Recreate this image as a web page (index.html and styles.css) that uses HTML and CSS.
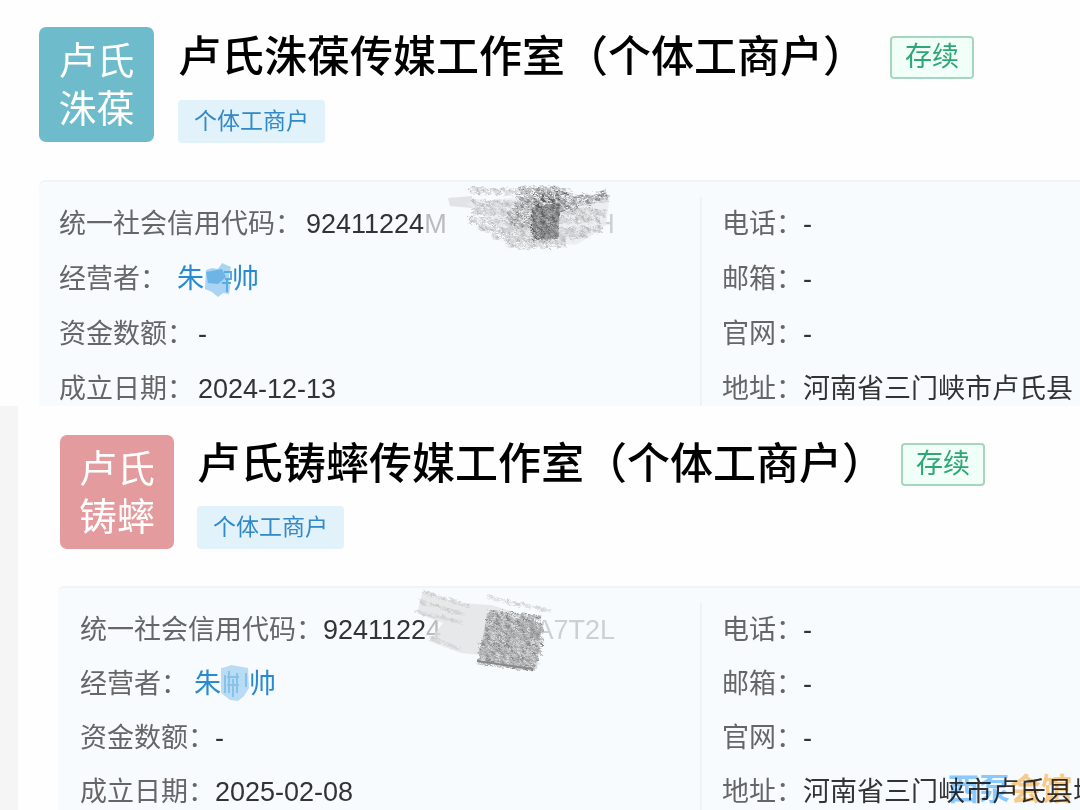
FILE: index.html
```
<!DOCTYPE html>
<html lang="zh-CN">
<head>
    <meta charset="UTF-8">
    <meta name="viewport" content="width=device-width, initial-scale=1.0">
    <title>企业信息</title>
    <link rel="stylesheet" href="styles.css">
</head>
<body>
    <svg class="defs" width="0" height="0">
        <!-- 铅笔颗粒 -->
        <filter id="grain" x="-5%" y="-10%" width="110%" height="120%">
            <feTurbulence type="fractalNoise" baseFrequency="0.2 0.5" numOctaves="3" seed="4" result="noise"/>
            <feColorMatrix in="noise" type="matrix" values="0 0 0 0 0  0 0 0 0 0  0 0 0 0 0  2.4 0 0 0 -0.7" result="mask"/>
            <feComposite in="SourceGraphic" in2="mask" operator="in" result="cut"/>
            <feDisplacementMap in="cut" in2="noise" scale="8" result="rough"/>
            <feGaussianBlur in="rough" stdDeviation="0.6"/>
        </filter>
    </svg>

    <section class="company first">
        <div class="header">
            <div class="logo">卢氏<br>洙葆</div>
            <div class="info">
                <div class="title">
                    <h1>卢氏洙葆传媒工作室（个体工商户）</h1>
                    <span class="status">存续</span>
                </div>
                <span class="tag">个体工商户</span>
            </div>
        </div>
        <div class="detail">
            <ul class="left">
                <li>
                    <span class="label">统一社会信用代码：</span>
                    <span class="value code">92411224<i>M</i><b class="tail">H</b>
                        <svg class="smear" width="175" height="72" viewBox="0 0 175 72">
                            <path d="M2 13l24-2v12l-22-2z" fill="#ccc" opacity=".5"/>
                            <path d="M20 18l50 38 60 4 20-12 10-8 4-30-90 2z" fill="#e9ecef" opacity=".8"/>
                            <g filter="url(#grain)" fill="none">
                                <path d="M24 5c50 5 90-1 100 2M26 18c40 2 90 2 136-4M26 26c40 3 80-3 134 2M22 35c50 4 90 1 132-2M32 43c40 5 80 3 124 1M46 51c30 3 70 3 96-2M60 59c30 2 40 1 60 0" stroke="#bbb" stroke-width="7"/>
                                <path d="M72 6h42M70 14h76l16-6M66 22h66M62 31h52M64 39h48" stroke="#8c8c8c" stroke-width="9"/>
                                <path d="M88 12h34M86 19h36M86 27h28M86 35h24M84 43h26M86 51h26" stroke="#5c5c5c" stroke-width="9"/>
                            </g>
                            <path d="M86 22l28-4-2 36h-24z" fill="#666" opacity=".45"/>
                        </svg>
                    </span>
                </li>
                <li>
                    <span class="label">经营者：</span>
                    <a class="value name" href="#">朱<svg class="mosaic" width="28" height="36" viewBox="0 0 28 36">
                            <path d="M2 8l6-2 6 1 4-6 9 4-2 8 1 12-1 7-6-1-5 4-6-5-7-3z" fill="#a9d4f3"/>
                            <path d="M2 10l16-3 4 8-8 7-10-1z" fill="#5fabe3" opacity=".8"/>
                            <path d="M20 10h7v7h-6M18 21h9M23 17v13" stroke="#5baae0" stroke-width="2" fill="none"/>
                        </svg>帅</a>
                </li>
                <li><span class="label">资金数额：</span><span class="value">-</span></li>
                <li><span class="label">成立日期：</span><span class="value">2024-12-13</span></li>
            </ul>
            <ul class="right">
                <li><span class="label">电话：</span><span class="value">-</span></li>
                <li><span class="label">邮箱：</span><span class="value">-</span></li>
                <li><span class="label">官网：</span><span class="value">-</span></li>
                <li><span class="label">地址：</span><span class="value">河南省三门峡市卢氏县</span></li>
            </ul>
        </div>
    </section>

    <section class="company second">
        <div class="header">
            <div class="logo">卢氏<br>铸蟀</div>
            <div class="info">
                <div class="title">
                    <h1>卢氏铸蟀传媒工作室（个体工商户）</h1>
                    <span class="status">存续</span>
                </div>
                <span class="tag">个体工商户</span>
            </div>
        </div>
        <div class="detail">
            <ul class="left">
                <li>
                    <span class="label">统一社会信用代码：</span>
                    <span class="value code">9241122<i>4</i><b class="tail">JA7T2L</b>
                        <svg class="smear" width="150" height="84" viewBox="0 0 150 84">
                            <path d="M12 2l34 12 34 2 20 6-20 6-10 38-20-2-32-12 14-18-26-10z" fill="#dedfdf" opacity=".7"/>
                            <g filter="url(#grain)" fill="none">
                                <path d="M12 3l46 14M8 12l46 14M4 22l48 12M16 48l34 12M76 8l64 14" stroke="#ccc" stroke-width="4"/>
                                <path d="M76 24l54 6M76 31l54 6M74 39l58 3M74 47l58 1M70 53l62 3M68 60l62 3M68 66l60 5M66 72l58 7" stroke="#848484" stroke-width="7"/>
                            </g>
                            <path d="M76 24l54 10-4 46-58-9z" fill="#999" opacity=".35"/>
                            <path d="M66 72l56 8" stroke="#888" stroke-width="2"/>
                        </svg>
                    </span>
                </li>
                <li>
                    <span class="label">经营者：</span>
                    <a class="value name" href="#">朱<svg class="mosaic" width="28" height="38" viewBox="0 0 28 38">
                            <path d="M0 3l5-1 5-2 6 1 11 2 1 20-5 8-6 5-8-1-9-7z" fill="#b9dcf5"/>
                            <path d="M4 10v18M8 6v22M12 14v18M16 8v20M6 12h12M6 20h12M25 8v14" stroke="#7dbbe8" stroke-width="2" opacity=".8"/>
                        </svg>帅</a>
                </li>
                <li><span class="label">资金数额：</span><span class="value">-</span></li>
                <li><span class="label">成立日期：</span><span class="value">2025-02-08</span></li>
            </ul>
            <ul class="right">
                <li><span class="label">电话：</span><span class="value">-</span></li>
                <li><span class="label">邮箱：</span><span class="value">-</span></li>
                <li><span class="label">官网：</span><span class="value">-</span></li>
                <li><span class="label">地址：</span><span class="value">河南省三门峡市卢氏县城</span></li>
            </ul>
        </div>
    </section>

    <div class="watermark">西泵<span>会馆</span></div>
</body>
</html>
```
FILE: styles.css
```
* {
  margin: 0;
  padding: 0;
  box-sizing: border-box;
  list-style: none;
}
body {
  position: relative;
  height: 100vh;
  overflow: hidden;
  background-color: #fefefe;
  font-family: "Liberation Sans", "Noto Sans CJK SC", sans-serif;
  color: #333;
}
.defs {
  position: absolute;
}
.company {
  background-color: #fefefe;
}
.first {
  padding: 27px 0 0 39px;
}
/* 盖住上一张卡片的底边 */
.second {
  position: relative;
  margin-top: -11px;
  padding: 29px 0 0 40px;
  border-left: 18px solid #f5f5f5;
}
.header {
  display: flex;
  gap: 24px;
}
.second .header {
  gap: 23px;
  padding-left: 2px;
}
.logo {
  flex: none;
  width: 115px;
  height: 115px;
  padding-top: 10px;
  border-radius: 7px;
  background-color: #6ebccb;
  font-size: 38px;
  line-height: 48px;
  text-align: center;
  color: #fff;
}
.second .logo {
  width: 114px;
  height: 114px;
  background-color: #e39b9d;
}
.title {
  display: flex;
  align-items: center;
  height: 60px;
  margin-bottom: 13px;
  white-space: nowrap;
}
.title h1 {
  font-size: 43px;
  font-weight: 500;
  line-height: 60px;
  color: #000;
}
.second .title {
  height: 58px;
}
.status {
  margin-left: 24px;
  padding: 0 13px;
  border: 2px solid #a5d6c0;
  border-radius: 4px;
  background-color: #f1fff9;
  font-size: 27px;
  line-height: 39px;
  color: #2fa674;
}
.second .status {
  margin-left: 16px;
}
.tag {
  display: inline-block;
  padding: 0 16px;
  border-radius: 4px;
  background-color: #e1f2fb;
  font-size: 23px;
  line-height: 43px;
  color: #3289c7;
}
.detail {
  display: grid;
  grid-template-columns: 1fr 380px;
  margin-top: 37px;
  padding-top: 15px;
  border-top: 2px solid #eff4f6;
  border-radius: 6px 0 0 0;
  background-color: #f7fbfe;
}
.detail ul {
  padding-left: 20px;
}
.second .left {
  padding-left: 22px;
}
.detail .right {
  border-left: 2px solid #edf2f5;
}
.detail li {
  display: flex;
  font-size: 27px;
  line-height: 55px;
  white-space: nowrap;
}
.first .left li {
  gap: 4px;
}
.second .detail li {
  line-height: 54px;
}
.label {
  color: #666;
}
.value {
  color: #333;
}
.code {
  position: relative;
}
.code i {
  font-style: normal;
  color: #bbb;
}
.code .tail {
  position: absolute;
  top: 0;
  right: -168px;
  font-weight: 400;
  color: #ccd0d6;
}
.second .code .tail {
  right: -174px;
}
.smear {
  position: absolute;
  top: -12px;
  left: 140px;
}
.second .smear {
  top: -14px;
  left: 88px;
}
.name {
  display: flex;
  align-items: center;
  margin-left: 6px;
  text-decoration: none;
  color: #2a8ad0;
}
/* 水印 */
.watermark {
  position: absolute;
  right: 8px;
  bottom: 0;
  font-size: 31px;
  font-weight: 700;
  line-height: 40px;
  color: #8fccff;
  mix-blend-mode: multiply;
}
.watermark span {
  color: #ffce8a;
}
```
